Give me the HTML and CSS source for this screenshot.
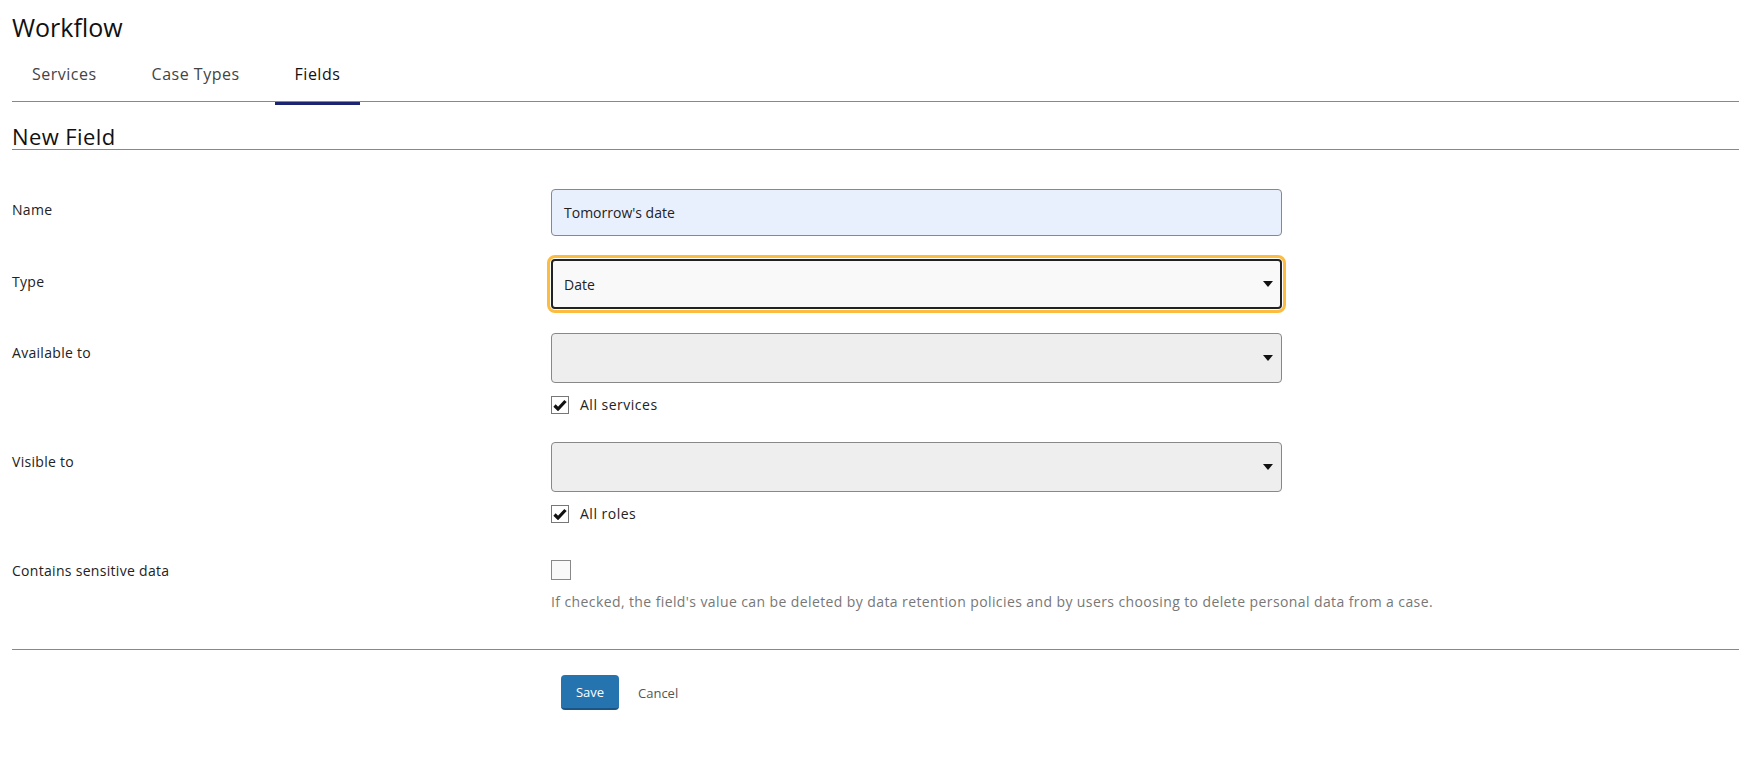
FILE: index.html
```html
<!DOCTYPE html>
<html lang="en">
<head>
    <meta charset="UTF-8">
    <title>Workflow - New Field</title>
    <link rel="stylesheet" href="styles.css">
</head>
<body>

<div class="page">
    <h1 class="page-title">Workflow</h1>
    <div class="tabs">
        <a href="#" class="tab">Services</a>
        <a href="#" class="tab">Case Types</a>
        <a href="#" class="tab active">Fields</a>
    </div>

    <h2 class="section-title">New Field</h2>

    <form class="field-form">
        <div class="form-row row-name">
            <label class="form-label">Name</label>
            <div class="form-control">
                <div class="text-input">Tomorrow's date</div>
            </div>
        </div>

        <div class="form-row row-type">
            <label class="form-label">Type</label>
            <div class="form-control">
                <div class="select focused">
                    <span>Date</span>
                    <svg width="10" height="6" viewBox="0 0 10 6"><path d="M0 0h10L5 6z" fill="#111"/></svg>
                </div>
            </div>
        </div>

        <div class="form-row row-available">
            <label class="form-label">Available to</label>
            <div class="form-control">
                <div class="select empty">
                    <span></span>
                    <svg width="10" height="6" viewBox="0 0 10 6"><path d="M0 0h10L5 6z" fill="#111"/></svg>
                </div>
                <div class="check-line">
                    <span class="checkbox checked">
                        <svg width="14" height="12" viewBox="0 0 14 12"><path d="M1.5 6.5l3.5 3.5 7.5-8" fill="none" stroke="#111" stroke-width="3.2"/></svg>
                    </span>
                    <span>All services</span>
                </div>
            </div>
        </div>

        <div class="form-row row-visible">
            <label class="form-label">Visible to</label>
            <div class="form-control">
                <div class="select empty">
                    <span></span>
                    <svg width="10" height="6" viewBox="0 0 10 6"><path d="M0 0h10L5 6z" fill="#111"/></svg>
                </div>
                <div class="check-line">
                    <span class="checkbox checked">
                        <svg width="14" height="12" viewBox="0 0 14 12"><path d="M1.5 6.5l3.5 3.5 7.5-8" fill="none" stroke="#111" stroke-width="3.2"/></svg>
                    </span>
                    <span>All roles</span>
                </div>
            </div>
        </div>

        <div class="form-row row-sensitive">
            <label class="form-label">Contains sensitive data</label>
            <div class="form-control">
                <span class="checkbox big"></span>
                <p class="help-text">If checked, the field's value can be deleted by data retention policies and by users choosing to delete personal data from a case.</p>
            </div>
        </div>

        <div class="form-actions">
            <a href="#" class="btn-save">Save</a>
            <a href="#" class="btn-cancel">Cancel</a>
        </div>
    </form>
</div>

</body>
</html>
```

FILE: styles.css
```css
body {
    margin: 0;
    padding: 0;
    font-family: "Open Sans", Lato, Arial, sans-serif;
    color: #222;
    background-color: #fff;
}
.page {
    padding-left: 12px;
}
.page-title {
    margin: 0;
    padding-top: 11px;
    font-size: 25px;
    font-weight: 400;
    line-height: 32px;
    color: #111;
}
.tabs {
    display: flex;
    margin-top: 17px;
    border-bottom: 1px solid #888;
    height: 41px;
}
.tab {
    display: block;
    padding: 3px 20px 0;
    margin-bottom: -1px;
    height: 39px;
    font-size: 16px;
    letter-spacing: 0.5px;
    color: #444;
    text-decoration: none;
    border-bottom: 3px solid transparent;
}
.tab + .tab {
    margin-left: 15px;
}
.tab.active {
    color: #111;
    border-bottom-color: #1c2370;
}
.section-title {
    margin: 0;
    padding-top: 21px;
    height: 26px;
    font-size: 22px;
    letter-spacing: 0.4px;
    font-weight: 400;
    line-height: 26px;
    color: #111;
    border-bottom: 1px solid #888;
}
.field-form {
    padding-top: 39px;
}
.form-row {
    display: grid;
    grid-template-columns: 539px 731px;
    margin-bottom: 23px;
}
.form-label {
    display: block;
    padding-top: 11px;
    font-size: 14px;
    letter-spacing: 0.3px;
    line-height: 20px;
    color: #222;
}
.text-input {
    box-sizing: border-box;
    height: 47px;
    padding: 0 12px;
    display: flex;
    align-items: center;
    font-size: 14px;
    background-color: #e8f0fe;
    border: 1px solid #888;
    border-radius: 4px;
}
.select {
    box-sizing: border-box;
    height: 50px;
    padding: 0 8px 0 12px;
    display: flex;
    align-items: center;
    justify-content: space-between;
    font-size: 14px;
    background-color: #eee;
    border: 1px solid #888;
    border-radius: 4px;
}
.select.focused {
    background-color: #f9f9f9;
    border: 2px solid #222;
    padding-left: 11px;
    padding-right: 7px;
    outline: 3px solid #fbbc3f;
    outline-offset: 1px;
}
.row-type .form-label {
    padding-top: 13px;
}
.row-type {
    margin-bottom: 24px;
}
.check-line {
    display: flex;
    align-items: center;
    margin-top: 12px;
    font-size: 14px;
    letter-spacing: 0.5px;
    line-height: 20px;
}
.checkbox {
    box-sizing: border-box;
    width: 18px;
    height: 18px;
    display: flex;
    align-items: center;
    justify-content: center;
    border: 1px solid #777;
    background-color: #fff;
    margin-right: 11px;
}
.checkbox.big {
    width: 20px;
    height: 20px;
    background-color: #f9f9f9;
    border-color: #888;
}
.row-available .form-label,
.row-visible .form-label {
    padding-top: 10px;
}
.row-available {
    margin-bottom: 27px;
}
.row-visible {
    margin-bottom: 36px;
}
.row-sensitive .form-label {
    padding-top: 1px;
}
.row-sensitive {
    margin-bottom: 0;
    padding-bottom: 37px;
    border-bottom: 1px solid #888;
}
.help-text {
    margin: 12px 0 0;
    font-size: 14px;
    letter-spacing: 0.4px;
    line-height: 20px;
    color: #777;
    white-space: nowrap;
}
.form-actions {
    display: flex;
    align-items: center;
    padding: 25px 0 0 549px;
}
.btn-save {
    box-sizing: border-box;
    width: 58px;
    height: 35px;
    display: flex;
    align-items: center;
    justify-content: center;
    font-size: 13px;
    color: #fff;
    text-decoration: none;
    background-color: #2574b0;
    border-bottom: 2px solid #1a5584;
    border-radius: 4px;
}
.btn-cancel {
    margin-left: 19px;
    font-size: 13px;
    color: #555;
    text-decoration: none;
}
```
